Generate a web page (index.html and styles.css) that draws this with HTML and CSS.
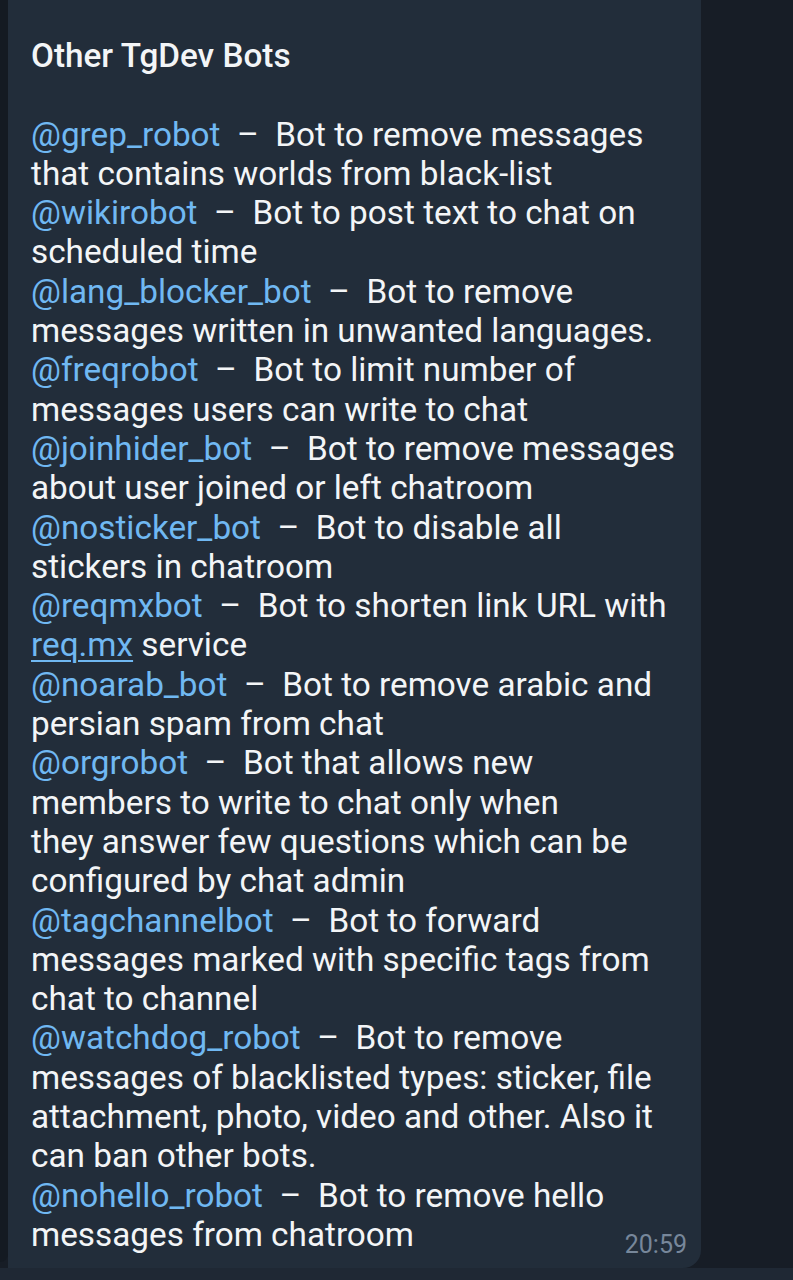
FILE: index.html
```html
<!DOCTYPE html>
<html lang="en">
<head>
<meta charset="utf-8">
<title>Other TgDev Bots</title>
<link rel="stylesheet" href="styles.css">
</head>
<body>
<div class="screen">
  <div class="edge"></div>
  <div class="bubble">
    <div class="message">
      <p class="title">Other TgDev Bots</p>
      <p class="blank">&nbsp;</p>
      <p class="entry"><a class="mention">@grep_robot</a>  –  Bot to remove messages<br>that contains worlds from black-list</p>
      <p class="entry"><a class="mention">@wikirobot</a>  –  Bot to post text to chat on<br>scheduled time</p>
      <p class="entry"><a class="mention">@lang_blocker_bot</a>  –  Bot to remove<br>messages written in unwanted languages.</p>
      <p class="entry"><a class="mention">@freqrobot</a>  –  Bot to limit number of<br>messages users can write to chat</p>
      <p class="entry"><a class="mention">@joinhider_bot</a>  –  Bot to remove messages<br>about user joined or left chatroom</p>
      <p class="entry"><a class="mention">@nosticker_bot</a>  –  Bot to disable all<br>stickers in chatroom</p>
      <p class="entry"><a class="mention">@reqmxbot</a>  –  Bot to shorten link URL with<br><a class="url">req.mx</a> service</p>
      <p class="entry"><a class="mention">@noarab_bot</a>  –  Bot to remove arabic and<br>persian spam from chat</p>
      <p class="entry"><a class="mention">@orgrobot</a>  –  Bot that allows new<br>members to write to chat only when<br>they answer few questions which can be<br>configured by chat admin</p>
      <p class="entry"><a class="mention">@tagchannelbot</a>  –  Bot to forward<br>messages marked with specific tags from<br>chat to channel</p>
      <p class="entry"><a class="mention">@watchdog_robot</a>  –  Bot to remove<br>messages of blacklisted types: sticker, file<br>attachment, photo, video and other. Also it<br>can ban other bots.</p>
      <p class="entry"><a class="mention">@nohello_robot</a>  –  Bot to remove hello<br>messages from chatroom</p>
    </div>
    <span class="time">20:59</span>
  </div>
  <div class="rest"></div>
</div>
</body>
</html>
```

FILE: styles.css
```css
html, body {
  margin: 0;
  padding: 0;
}

body {
  background: #1f2834;
  font-family: Roboto, "Liberation Sans", sans-serif;
  overflow: hidden;
}

.screen {
  display: flex;
  height: 1268px;
  background: #171d26;
}

.edge {
  width: 8px;
  height: 1262px;
  background: #141a22;
  border-bottom-right-radius: 8px;
  flex: none;
}

.bubble {
  position: relative;
  width: 693px;
  flex: none;
  background: #222d3a;
  border-bottom-right-radius: 18px;
  box-sizing: border-box;
  padding: 36px 14px 12px 23px;
}

.rest {
  flex: 1;
}

.message {
  color: #f3f5f7;
  font-size: 33.3px;
  line-height: 39.3px;
}

.message p {
  margin: 0;
  white-space: pre;
}

.title {
  font-weight: 500;
}

.mention {
  color: #70b8f2;
}

.url {
  color: #70b8f2;
  text-decoration: underline;
  text-decoration-thickness: 2px;
  text-underline-offset: 4px;
}

.time {
  position: absolute;
  right: 14px;
  bottom: 8px;
  font-size: 25px;
  line-height: 30px;
  color: #77879a;
}
```
